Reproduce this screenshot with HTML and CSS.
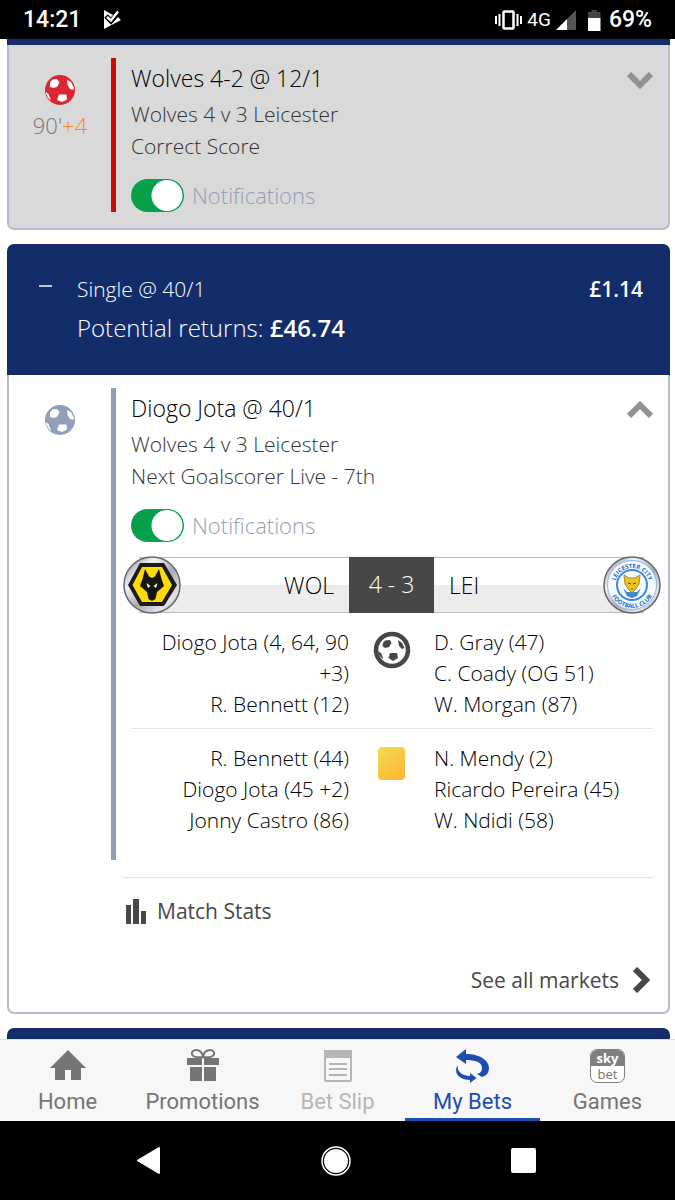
FILE: index.html
```html
<!DOCTYPE html>
<html lang="en">
<head>
<meta charset="utf-8">
<meta name="viewport" content="width=device-width, initial-scale=1">
<title>My Bets</title>
<link rel="stylesheet" href="styles.css">
</head>
<body>
<svg class="defs" aria-hidden="true">
  <symbol id="ball" viewBox="0 0 30 30">
    <circle cx="15" cy="15" r="15" fill="currentColor"/>
    <g fill="#fff">
      <path d="M7.500 4.500L12 4L14.500 7L12.500 11.500L9 13L5 12L5 7.500Z"/>
      <path d="M22 5L26 7L29 13L28 15L25 14L22.500 10Z"/>
      <path d="M14 19.500L21.500 19.500L22 24.500L17 27L12 25Z"/>
      <path d="M0.500 17L3.500 19L6 25.500A15 15 0 0 1 .5 17Z"/>
    </g>
  </symbol>
</svg>
<div class="screen">
  <header class="status">
    <time class="clock">14:21</time>
    <svg class="play-icon" width="20" height="20" viewBox="0 0 20 20"><path d="M1 0L8 4L15 7L18 10L1 19Z" fill="#fff"/><path d="M3 6L8 11L17 1" fill="none" stroke="#000" stroke-width="5"/><path d="M4 7L8 10.500L15 1.500" fill="none" stroke="#fff" stroke-width="2.500"/></svg>
    <div class="status-right">
      <svg width="27" height="20" viewBox="0 0 27 20" fill="none" stroke="#fff" stroke-width="2"><path d="M1 6V14M4.500 4V16M22.500 4V16M26 6V14"/><rect x="8.500" y="1.500" width="10" height="17" rx="1" stroke-width="2.500"/></svg>
      <span class="network">4G</span>
      <svg width="20" height="20" viewBox="0 0 20 20"><path d="M20 0V20H11V9Z" fill="#555"/><path d="M0 20L11 9V20Z" fill="#fff"/></svg>
      <svg class="battery" width="13" height="21" viewBox="0 0 13 21"><path d="M3.500 0H9V2H12.500V8H0V2H3.500Z" fill="#444"/><path d="M0 8H12.500V21H0Z" fill="#fff"/></svg>
      <span>69%</span>
    </div>
  </header>

  <main class="bets">
    <article class="card card-cut">
      <div class="card-body lost">
        <div class="bet">
          <div class="side"><svg class="ball" width="30" height="30"><use href="#ball"/></svg><p class="minute">90'<span>+4</span></p></div>
          <div class="details">
            <div class="title-row"><h2>Wolves 4-2 @ 12/1</h2><button class="toggle" aria-label="Expand"><svg width="26" height="18" viewBox="0 0 26 18"><path d="M2 3L13 14L24 3"/></svg></button></div>
            <p>Wolves 4 v 3 Leicester</p>
            <p>Correct Score</p>
            <label class="notify"><input type="checkbox" role="switch" checked>Notifications</label>
          </div>
        </div>
      </div>
    </article>

    <article class="card">
      <header class="card-head">
        <button class="collapse" aria-label="Collapse"></button>
        <div class="head-text"><div class="head-row"><span>Single @ 40/1</span><b>£1.14</b></div><p class="returns">Potential returns: <b>£46.74</b></p></div>
      </header>
      <div class="card-body open">
        <div class="bet">
          <div class="side"><svg class="ball" width="30" height="30"><use href="#ball"/></svg></div>
          <div class="details">
            <div class="title-row"><h2>Diogo Jota @ 40/1</h2><button class="toggle" aria-label="Collapse"><svg width="26" height="18" viewBox="0 0 26 18"><path d="M2 15L13 4L24 15"/></svg></button></div>
            <p>Wolves 4 v 3 Leicester</p>
            <p>Next Goalscorer Live - 7th</p>
            <label class="notify"><input type="checkbox" role="switch" checked>Notifications</label>
            <section class="scoreboard">
              <div class="team home"><span>WOL</span></div>
              <strong class="score">4 - 3</strong>
              <div class="team away"><span>LEI</span></div>
              <svg class="badge badge-home" viewBox="0 0 58 58">
                <defs><linearGradient id="rim" x1="0" y1="0" x2="1" y2="1"><stop offset="0" stop-color="#85858d"/><stop offset=".3" stop-color="#f2f2f6"/><stop offset=".55" stop-color="#aaaab4"/><stop offset=".8" stop-color="#e4e4ea"/><stop offset="1" stop-color="#77777d"/></linearGradient></defs>
                <circle cx="29" cy="29" r="28" fill="url(#rim)" stroke="#66676d" stroke-width="1.500"/>
                <path d="M17 7H41L54 29L41 50H17L5 29Z" fill="#1c1b18"/>
                <path d="M19 11H39L49 29L39 46H19L9.500 29Z" fill="#fddb0a"/>
                <path d="M22 13L26 20.500L29 22L32 20.500L36 13L38.500 23L41 30L34 36L32.500 43L29 45L25.500 43L24 36L17 30L19.500 23Z" fill="#17150f"/>
                <path d="M23.500 27L27.500 30L25 32ZM34.500 27L30.500 30L33 32Z" fill="#fff"/>
              </svg>
              <svg class="badge badge-away" viewBox="0 0 58 58">
                <defs><path id="arc-top" d="M12 29A17 17 0 0 1 46 29"/><path id="arc-bottom" d="M6 29A23 23 0 0 0 52 29"/></defs>
                <circle cx="29" cy="29" r="28" fill="url(#rim)" stroke="#66676d" stroke-width="1.500"/>
                <circle cx="29" cy="29" r="24.500" fill="#f5faff" stroke="#8cb9eb" stroke-width="1"/>
                <circle cx="29" cy="29" r="15" fill="#f5faff" stroke="#3c86df" stroke-width="2"/>
                <text class="badge-text"><textPath href="#arc-top" startOffset="50%" text-anchor="middle">LEICESTER CITY</textPath></text>
                <text class="badge-text"><textPath href="#arc-bottom" startOffset="50%" text-anchor="middle">FOOTBALL CLUB</textPath></text>
                <path d="M20 32L24 40L29 42L34 40L38 32L34 36H24Z" fill="#3c86df"/>
                <path d="M21 19L26 22H32L37 19L36 28L32 34L29 37L26 34L22 28Z" fill="#f0c419" stroke="#a28d31"/>
                <path d="M25 27L28 28M33 27L30 28M28 33H30" stroke="#4d441d"/>
              </svg>
            </section>
            <section class="events">
              <ul class="left"><li>Diogo Jota (4, 64, 90 +3)</li><li>R. Bennett (12)</li></ul>
              <div class="event-icon"><svg width="38" height="38" viewBox="0 0 38 38"><circle cx="19" cy="19" r="16" fill="#fff" stroke="#474747" stroke-width="4.500"/><g fill="#474747"><path d="M12 9.500L17 9L18.500 12L16 16L12 17L9.500 15L10 12Z"/><path d="M25 9L29 12L31.500 17L29 18L26 15Z"/><path d="M17 22L24 22L25 27L20 30L15.500 27Z"/><path d="M5 20L8 22L10.500 28Q6 26 5 20Z"/></g></svg></div>
              <ul class="right"><li>D. Gray (47)</li><li>C. Coady (OG 51)</li><li>W. Morgan (87)</li></ul>
            </section>
            <section class="events">
              <ul class="left"><li>R. Bennett (44)</li><li>Diogo Jota (45 +2)</li><li>Jonny Castro (86)</li></ul>
              <div class="event-icon"><span class="yellow-card"></span></div>
              <ul class="right"><li>N. Mendy (2)</li><li>Ricardo Pereira (45)</li><li>W. Ndidi (58)</li></ul>
            </section>
          </div>
        </div>
        <footer class="card-links">
          <a class="stats" href="#stats"><svg width="20" height="25" viewBox="0 0 20 25" fill="#474747"><path d="M0 6H5V25H0ZM7 0H13V25H7ZM15 12H20V25H15Z"/></svg>Match Stats</a>
          <a class="markets" href="#markets">See all markets<svg width="17" height="26" viewBox="0 0 17 26"><path d="M2 2L13 13L2 24" fill="none" stroke="#474747" stroke-width="6"/></svg></a>
        </footer>
      </div>
    </article>
    <div class="next-card"></div>
  </main>

  <nav class="tabs">
    <a href="#home"><svg width="38" height="34" viewBox="0 0 38 34"><path d="M19 1L37 19H32V31H22V21H16V31H6V19H1Z" fill="#757575"/></svg>Home</a>
    <a href="#promotions"><svg width="34" height="34" viewBox="0 0 34 34"><path d="M1 9H16V16H1ZM18 9H33V16H18ZM4 18H16V32H4ZM18 18H30V32H18Z" fill="#757575"/><path d="M17 8C3 10 4 1 10 1Q16 1 17 8Q18 1 24 1C30 1 31 10 17 8" fill="none" stroke="#757575" stroke-width="2"/></svg>Promotions</a>
    <a class="dim" href="#slip"><svg width="30" height="34" viewBox="0 0 30 34"><rect x="2" y="2" width="26" height="30" rx="1" fill="#f7f7f7" stroke="#b5b5b5" stroke-width="2"/><path d="M1 1H29V9H1Z" fill="#b5b5b5"/><path d="M6 15H24M6 20H24M6 26H24" stroke="#b5b5b5" stroke-width="2"/></svg>Bet Slip</a>
    <a class="active" href="#bets" aria-current="page"><svg width="36" height="34" viewBox="0 0 36 34" fill="#1d4db3"><path d="M1 8L11 0V5C24 5 34 11 34 19Q34 26 27 28L22 25Q27 24 27 19C27 13 20 11 11 11V15Z"/><path d="M2.500 16Q2 26 15 27V24L21.500 29L15 34V31C5 31 -2 25 2.500 16Z"/></svg>My Bets</a>
    <a href="#games"><span class="sky-logo"><b>sky</b><span>bet</span></span>Games</a>
  </nav>
  <div class="system">
    <button aria-label="Back"><svg width="26" height="30" viewBox="0 0 26 30"><path d="M23 2V27L2 14.500Z" fill="#fff" stroke="#fff" stroke-width="2" stroke-linejoin="round"/></svg></button>
    <button aria-label="Home"><svg width="30" height="30" viewBox="0 0 30 30"><circle cx="15" cy="15" r="14" fill="none" stroke="#fff" stroke-width="1.500"/><circle cx="15" cy="15" r="12" fill="#fff"/></svg></button>
    <button aria-label="Recent apps"><svg width="26" height="26" viewBox="0 0 26 26"><rect width="25" height="25" rx="2" fill="#fff"/></svg></button>
  </div>
</div>
</body>
</html>
```

FILE: styles.css
```css
* { box-sizing: border-box; }
body { margin: 0; background: #fff; color: #000; font: 300 21px/32px "Open Sans", "Noto Sans", sans-serif; }
h2, p, ul { margin: 0; padding: 0; }
ul { list-style: none; }
b { font-weight: 600; }
a { color: inherit; text-decoration: none; }
button { padding: 0; border: 0; background: none; }
svg { display: block; flex: none; }
.defs { position: absolute; width: 0; height: 0; }
.screen { min-height: 100vh; display: flex; flex-direction: column; }

.status { height: 39px; padding: 1px 23px 0 23px; display: flex; align-items: center; gap: 22px; background: #000; color: #fff; font: 500 23px/40px Roboto, sans-serif; }
.status-right { margin-left: auto; display: flex; align-items: center; gap: 5px; }
.network { font-size: 19px; font-weight: 400; }
.battery { margin: 0 3px 0 7px; }

.bets { flex: 1; display: flex; flex-direction: column; gap: 14px; padding: 0 5px 0 7px; }
.card-cut { border-top: 6px solid #132d6b; }
.card-body { border: 2px solid #b4bed2; border-top: 0; border-radius: 0 0 7px 7px; }
.bet { display: grid; grid-template-columns: 102px minmax(0, 1fr); padding: 13px 15px 0 0; }
.side { padding-top: 17px; display: flex; flex-direction: column; align-items: center; }
.lost { background: #d9d9d9; padding-bottom: 16px; }
.lost .ball { color: #dc2432; }
.open .ball { color: #929fb9; }
.minute { margin-top: 4px; color: #777; font-size: 22px; line-height: 32px; }
.minute span { color: #f5871f; }
.details { border-left: 5px solid #c90d05; padding-left: 15px; color: #333; }
.open .details { border-color: #929db9; padding-bottom: 24px; }
.title-row { display: flex; align-items: center; justify-content: space-between; height: 40px; color: #000; }
h2 { font-size: 23px; font-weight: 300; }
.toggle { padding-top: 4px; }
.toggle path { fill: none; stroke: #929292; stroke-width: 6; }
.notify { display: flex; align-items: center; gap: 8px; margin-top: 16px; color: #959eb5; font-size: 22px; line-height: 34px; }
.notify input { appearance: none; width: 53px; height: 33px; margin: 0; border-radius: 17px; background: radial-gradient(circle at 36px 50%, #fff 15px, #08a04b 16px); }

.card-head { display: flex; align-items: flex-start; padding: 28px 27px 26px 32px; border-radius: 7px 7px 0 0; background: #132d6b; color: #fff; }
.collapse { width: 13px; height: 2px; margin: 13px 25px 0 0; background: #bdc5d6; }
.head-text { flex: 1; }
.head-row { display: flex; justify-content: space-between; line-height: 34px; }
.returns { font-size: 24px; line-height: 43px; }

.scoreboard { position: relative; display: grid; grid-template-columns: 1fr 85px 1fr; margin: 15px 9px 14px 8px; color: #000; font-size: 23px; line-height: 54px; }
.team { border: 1px solid #bbb; border-width: 1px 0; background: linear-gradient(#fff 50%, #ececec 50%); }
.home { text-align: right; padding-right: 15px; }
.away { padding-left: 15px; }
.score { background: #474747; color: #fff; font-weight: 300; text-align: center; }
.badge { position: absolute; top: -1px; width: 58px; height: 58px; }
.badge-home { left: -16px; }
.badge-away { right: -17px; }
.badge-text { font: 700 6px "Open Sans", sans-serif; fill: #286cc5; }
.events { display: grid; grid-template-columns: 1fr 85px 1fr; margin: 0 9px 0 8px; line-height: 31px; color: #000; }
.events + .events { margin: 8px 0 0; padding: 14px 9px 0 8px; border-top: 1px solid #e4e4e4; }
.left { text-align: right; }
.event-icon { display: flex; justify-content: center; align-items: flex-start; padding-top: 4px; }
.yellow-card { width: 27px; height: 33px; border-radius: 4px; background: linear-gradient(145deg, #f4dc51, #ffb233); }
.card-links { display: flex; flex-direction: column; margin: 17px 15px 0 114px; padding-bottom: 16px; border-top: 1px solid #e4e4e4; color: #474747; font-weight: 400; }
.stats { display: flex; align-items: center; gap: 11px; margin: 17px 0 37px 3px; }
.markets { display: flex; align-items: center; align-self: flex-end; gap: 14px; margin-right: 3px; }
.next-card { flex: 1; min-height: 11px; border-radius: 7px 7px 0 0; background: #132d6b; }

.tabs { display: grid; grid-template-columns: repeat(5, 1fr); height: 82px; background: #f7f7f7; border-top: 1px solid #ddd; color: #757575; font: 400 22px/32px Roboto, sans-serif; }
.tabs a { display: flex; flex-direction: column; align-items: center; gap: 3px; padding-top: 9px; }
.tabs .dim { color: #b5b5b5; }
.tabs .active { color: #1d4db3; border-bottom: 4px solid #1d4db3; }
.sky-logo { width: 35px; height: 34px; border: 1px solid #808080; border-radius: 7px; overflow: hidden; background: #fff; display: flex; flex-direction: column; text-align: center; font: 13px/16px "Open Sans", sans-serif; }
.sky-logo b { background: #808080; color: #fff; font-weight: 700; }
.system { height: 79px; padding: 0 57px 0 55px; display: grid; grid-template-columns: repeat(3, 1fr); align-items: center; justify-items: center; background: #000; }
```
